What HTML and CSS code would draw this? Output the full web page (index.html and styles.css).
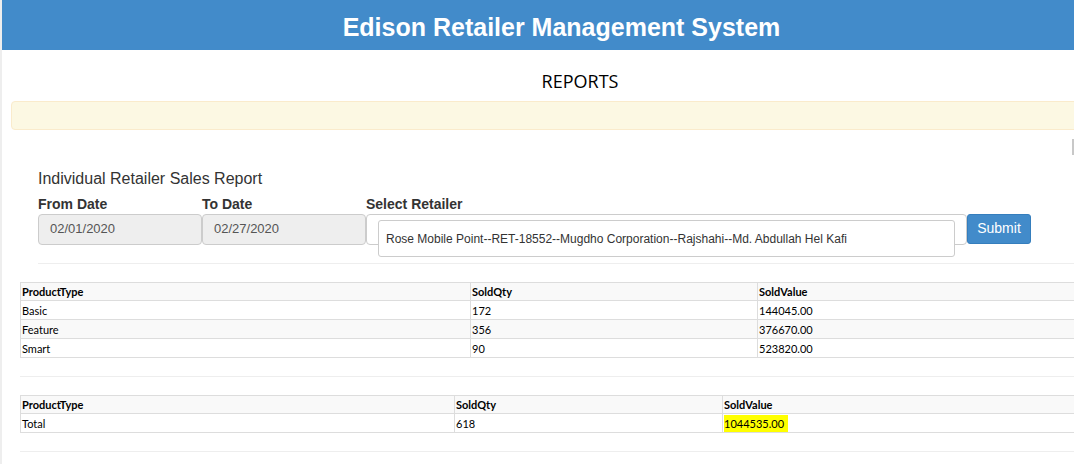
FILE: index.html
```html
<!DOCTYPE html>
<html>
<head>
<meta charset="utf-8">
<link rel="stylesheet" href="styles.css">
</head>
<body>
<div class="page">
  <header class="topbar"><h1>Edison Retailer Management System</h1></header>
  <div class="content">
    <h2 class="page-title">REPORTS</h2>
    <div class="alert"></div>
    <div class="mark-row"><span class="mark"></span></div>
    <section class="report">
      <h3>Individual Retailer Sales Report</h3>
      <div class="form-row">
        <div class="field f-from">
          <label>From Date</label>
          <div class="input disabled">02/01/2020</div>
        </div>
        <div class="field f-to">
          <label>To Date</label>
          <div class="input disabled">02/27/2020</div>
        </div>
        <div class="field f-ret">
          <label>Select Retailer</label>
          <div class="input select">
            <div class="choice">Rose Mobile Point--RET-18552--Mugdho Corporation--Rajshahi--Md. Abdullah Hel Kafi</div>
          </div>
        </div>
        <button class="btn">Submit</button>
      </div>
      <hr class="sep sep1">
    </section>
    <table class="grid t1">
      <colgroup><col style="width:450px"><col style="width:287px"><col></colgroup>
      <tr class="head"><th>ProductType</th><th>SoldQty</th><th>SoldValue</th></tr>
      <tr><td>Basic</td><td>172</td><td>144045.00</td></tr>
      <tr class="alt"><td>Feature</td><td>356</td><td>376670.00</td></tr>
      <tr><td>Smart</td><td>90</td><td>523820.00</td></tr>
    </table>
    <hr class="sep sep2">
    <table class="grid t2">
      <colgroup><col style="width:434px"><col style="width:268px"><col></colgroup>
      <tr class="head"><th>ProductType</th><th>SoldQty</th><th>SoldValue</th></tr>
      <tr><td>Total</td><td>618</td><td><span class="hl">1044535.00</span></td></tr>
    </table>
    <hr class="sep sep3">
  </div>
</div>
</body>
</html>
```
FILE: styles.css
```css
html, body { margin: 0; padding: 0; background: #fff; overflow: hidden; }
body { font-family: "Liberation Sans", Arial, sans-serif; color: #333; width: 1074px; height: 464px; }
.page { width: 1074px; height: 464px; position: relative; overflow: hidden; border-left: 2px solid #eeeeee; box-sizing: border-box; }
.topbar { background: #428bca; height: 50px; box-sizing: border-box; margin-left: -1px; display: flex; align-items: center; justify-content: center; padding-left: 48px; padding-top: 4px; }
.topbar h1 { margin: 0; color: #fff; font-family: "Liberation Sans", Arial, sans-serif; font-weight: bold; font-size: 25px; letter-spacing: 0; }
.content { width: 1200px; }
.page-title { margin: 0; padding-top: 21px; height: 30px; text-align: center; width: 1156px; font-family: "Open Sans", sans-serif; font-weight: normal; font-size: 18px; color: #000; line-height: 20px; }
.alert { margin: 0 0 0 9px; height: 27px; background: #fcf8e3; border: 1px solid #faebcc; border-radius: 4px; }
.mark-row { height: 39px; position: relative; }
.mark { position: absolute; left: 1070px; top: 9px; width: 2px; height: 16px; background: #c8c8c8; }
.report { padding-left: 36px; }
.report h3 { margin: 0; font-size: 16px; font-weight: normal; line-height: 20px; color: #333; }
.form-row { display: flex; align-items: flex-start; margin-top: 8px; }
.field { display: flex; flex-direction: column; }
.field label { font-weight: bold; font-size: 14px; line-height: 15px; height: 17px; color: #333; }
.f-from { width: 164px; }
.f-to { width: 164px; }
.f-ret { width: 601px; }
.input { height: 31px; box-sizing: border-box; border: 1px solid #ccc; border-radius: 4px; font-size: 13px; color: #555; padding: 6px 11px; line-height: 15px; }
.input.disabled { background: #eee; }
.input.select { background: #fff; position: relative; padding: 0; }
.choice { position: absolute; left: 11px; top: 5px; width: 577px; height: 37px; box-sizing: border-box; background: #fff; border: 1px solid #ccc; border-radius: 3px; font-size: 12px; padding: 11px 0 0 7px; color: #333; line-height: 14px; }
.btn { margin-top: 17px; width: 64px; height: 30px; background: #428bca; border: 1px solid #357ebd; border-radius: 3px; color: #fff; font-family: "Liberation Sans", Arial, sans-serif; font-size: 14px; padding: 0 0 2px; }
.sep { border: 0; border-top: 1px solid #eee; margin: 0; }
.sep1 { margin-top: 18px; margin-left: 0; }
.grid { border-collapse: collapse; font-family: Lato, Tahoma, sans-serif; font-size: 11px; color: #000; margin-left: 18px; width: 1200px; }
.t1 { margin-top: 18px; }
.grid th, .grid td { border: 1px solid #ddd; height: 19px; padding: 0 1px; text-align: left; line-height: 17px; box-sizing: border-box; }
.grid tr.head th { height: 18px; line-height: 16px; }
.grid th { font-weight: bold; }
.grid tr.head, .grid tr.alt { background: #f9f9f9; }
.sep2 { margin: 18px 0 0 18px; }
.t2 { margin-top: 18px; }
.sep3 { margin: 18px 0 0 18px; }
.hl { background: #ffff00; display: inline-block; padding-right: 4px; }
```
